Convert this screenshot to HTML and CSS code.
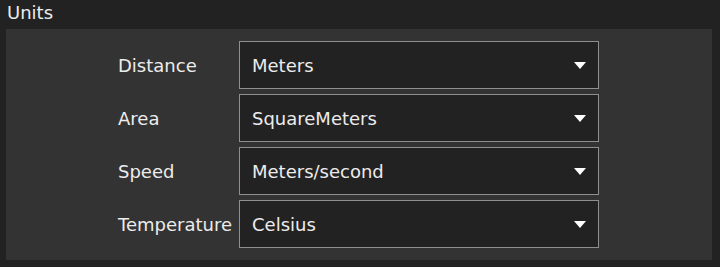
FILE: index.html
```html
<!DOCTYPE html>
<html lang="en">
<head>
  <meta charset="UTF-8">
  <title>Units</title>
  <link rel="stylesheet" href="styles.css">
</head>
<body>
  <div class="group-title">Units</div>
  <div class="panel">
    <div class="form-grid">
      <label>Distance</label>
      <div class="combo"><span>Meters</span><i class="arrow"></i></div>

      <label>Area</label>
      <div class="combo"><span>SquareMeters</span><i class="arrow"></i></div>

      <label>Speed</label>
      <div class="combo"><span>Meters/second</span><i class="arrow"></i></div>

      <label>Temperature</label>
      <div class="combo"><span>Celsius</span><i class="arrow"></i></div>
    </div>
  </div>
</body>
</html>
```

FILE: styles.css
```css
body {
  margin: 0;
  background-color: #222;
  color: #ececec;
  font-family: "DejaVu Sans", sans-serif;
  font-size: 18px;
  width: 720px;
  height: 267px;
  overflow: hidden;
}
.group-title {
  padding: 0 0 0 7px;
  height: 29px;
  line-height: 26px;
}
.panel {
  margin: 0 8px 0 6px;
  background-color: #333;
  padding: 12px 0 12px 112px;
}
.form-grid {
  display: grid;
  grid-template-columns: 115px 360px;
  column-gap: 6px;
  row-gap: 5px;
  align-items: center;
}
.form-grid label {
  white-space: nowrap;
  padding-top: 1px;
}
.combo {
  height: 48px;
  box-sizing: border-box;
  border: 1px solid #8f8f8f;
  background-color: #222;
  display: flex;
  align-items: center;
  justify-content: space-between;
  padding: 1px 12px 0 12px;
}
.arrow {
  width: 0;
  height: 0;
  border-left: 6px solid transparent;
  border-right: 6px solid transparent;
  border-top: 7px solid #fff;
}
```
